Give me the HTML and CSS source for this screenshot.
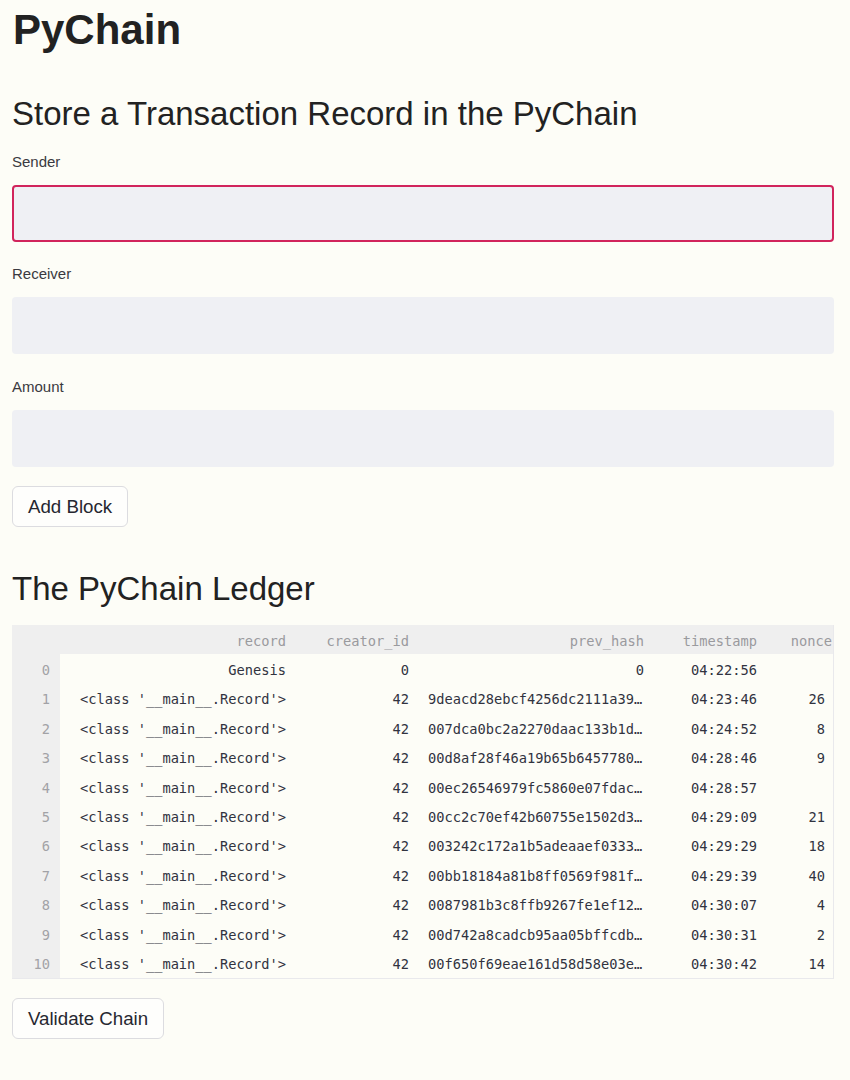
FILE: index.html
```html
<!DOCTYPE html>
<html lang="en">
<head>
<meta charset="utf-8">
<title>PyChain</title>
<link rel="stylesheet" href="styles.css">
</head>
<body>
<main class="page">
  <h1 class="title">PyChain</h1>
  <h2 class="subtitle">Store a Transaction Record in the PyChain</h2>

  <div class="field">
    <label class="label">Sender</label>
    <div class="input input-focused"></div>
  </div>
  <div class="field">
    <label class="label">Receiver</label>
    <div class="input"></div>
  </div>
  <div class="field">
    <label class="label">Amount</label>
    <div class="input"></div>
  </div>

  <button class="btn btn-add">Add Block</button>

  <h2 class="subtitle ledger-title">The PyChain Ledger</h2>

  <div class="table-wrap">
    <table class="ledger">
      <colgroup>
        <col class="c-idx"><col class="c-rec"><col class="c-cre"><col class="c-hash"><col class="c-ts"><col class="c-nonce">
      </colgroup>
      <thead>
        <tr><th class="idx"></th><th>record</th><th>creator_id</th><th>prev_hash</th><th>timestamp</th><th class="nonce-h">nonce</th></tr>
      </thead>
      <tbody>
        <tr><td class="idx">0</td><td>Genesis</td><td>0</td><td class="hash r">0</td><td>04:22:56</td><td class="nonce"></td></tr>
        <tr><td class="idx">1</td><td>&lt;class '__main__.Record'&gt;</td><td>42</td><td class="hash">9deacd28ebcf4256dc2111a39…</td><td>04:23:46</td><td class="nonce">26</td></tr>
        <tr><td class="idx">2</td><td>&lt;class '__main__.Record'&gt;</td><td>42</td><td class="hash">007dca0bc2a2270daac133b1d…</td><td>04:24:52</td><td class="nonce">8</td></tr>
        <tr><td class="idx">3</td><td>&lt;class '__main__.Record'&gt;</td><td>42</td><td class="hash">00d8af28f46a19b65b6457780…</td><td>04:28:46</td><td class="nonce">9</td></tr>
        <tr><td class="idx">4</td><td>&lt;class '__main__.Record'&gt;</td><td>42</td><td class="hash">00ec26546979fc5860e07fdac…</td><td>04:28:57</td><td class="nonce"></td></tr>
        <tr><td class="idx">5</td><td>&lt;class '__main__.Record'&gt;</td><td>42</td><td class="hash">00cc2c70ef42b60755e1502d3…</td><td>04:29:09</td><td class="nonce">21</td></tr>
        <tr><td class="idx">6</td><td>&lt;class '__main__.Record'&gt;</td><td>42</td><td class="hash">003242c172a1b5adeaaef0333…</td><td>04:29:29</td><td class="nonce">18</td></tr>
        <tr><td class="idx">7</td><td>&lt;class '__main__.Record'&gt;</td><td>42</td><td class="hash">00bb18184a81b8ff0569f981f…</td><td>04:29:39</td><td class="nonce">40</td></tr>
        <tr><td class="idx">8</td><td>&lt;class '__main__.Record'&gt;</td><td>42</td><td class="hash">0087981b3c8ffb9267fe1ef12…</td><td>04:30:07</td><td class="nonce">4</td></tr>
        <tr><td class="idx">9</td><td>&lt;class '__main__.Record'&gt;</td><td>42</td><td class="hash">00d742a8cadcb95aa05bffcdb…</td><td>04:30:31</td><td class="nonce">2</td></tr>
        <tr><td class="idx">10</td><td>&lt;class '__main__.Record'&gt;</td><td>42</td><td class="hash">00f650f69eae161d58d58e03e…</td><td>04:30:42</td><td class="nonce">14</td></tr>
      </tbody>
    </table>
  </div>

  <button class="btn btn-validate">Validate Chain</button>
</main>
</body>
</html>
```

FILE: styles.css
```css
html, body {
  margin: 0;
  padding: 0;
  background: #fdfdf7;
}

body {
  font-family: "Liberation Sans", Arial, sans-serif;
  color: #262730;
}

.page {
  width: 822px;
  padding: 5px 0 0 12px;
  display: flex;
  flex-direction: column;
  align-items: flex-start;
}

.title {
  margin: 0;
  font-size: 42px;
  line-height: 1.2;
  font-weight: 700;
  color: #222222;
  padding-left: 1px;
}

.subtitle {
  margin: 38.4px 0 0 0;
  font-size: 33px;
  line-height: 1.2;
  font-weight: 400;
  color: #222222;
}

.field {
  width: 100%;
  display: flex;
  flex-direction: column;
}

.field:first-of-type {
  margin-top: 19.4px;
}

.field + .field {
  margin-top: 23.3px;
}

.label {
  font-size: 15px;
  line-height: 18px;
  color: #3a3a40;
}

.input {
  margin-top: 14.2px;
  height: 57px;
  box-sizing: border-box;
  background: #eff0f4;
  border: 2px solid transparent;
  border-radius: 4px;
}

.input-focused {
  border-color: #d1245c;
}

.btn {
  box-sizing: border-box;
  height: 41px;
  padding: 0 15px;
  font-family: "Liberation Sans", Arial, sans-serif;
  font-size: 18.7px;
  color: #262730;
  background: #fefefc;
  border: 1px solid #dcdce0;
  border-radius: 6px;
}

.btn-add {
  margin-top: 19.5px;
}

.ledger-title {
  margin-top: 41.5px;
}

.table-wrap {
  margin-top: 16.5px;
  width: 822px;
  overflow: hidden;
  box-sizing: border-box;
  border-right: 1px solid #e9e9ec;
  border-bottom: 1px solid #e9e9ec;
}

.ledger {
  table-layout: fixed;
  border-collapse: collapse;
  width: 821px;
  font-family: "DejaVu Sans Mono", "Liberation Mono", monospace;
  font-size: 13.7px;
  color: #31333f;
}

.c-idx { width: 48px; }
.c-rec { width: 236px; }
.c-cre { width: 123px; }
.c-hash { width: 235px; }
.c-ts { width: 113px; }
.c-nonce { width: 66px; }

.ledger th,
.ledger td {
  height: 29.4px;
  padding: 2px 10px 0 0;
  text-align: right;
  white-space: nowrap;
  overflow: hidden;
  font-weight: 400;
  box-sizing: border-box;
}

.ledger thead th {
  background: #efefef;
  color: #9a9a9e;
}

.ledger td.idx {
  background: #efefef;
  color: #a2a2a6;
  padding-right: 10px;
}

.ledger td.hash {
  text-align: left;
  padding-left: 9px;
}

.ledger td.hash.r {
  text-align: right;
}

.ledger th.nonce-h {
  padding-right: 1px;
}

.ledger td.nonce {
  padding-right: 8px;
}

.btn-validate {
  margin-top: 19.5px;
}
```
